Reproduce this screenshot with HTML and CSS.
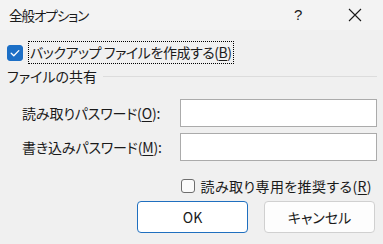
FILE: index.html
```html
<!DOCTYPE html>
<html lang="ja">
<head>
<meta charset="utf-8">
<title>全般オプション</title>
<link rel="stylesheet" href="styles.css">
</head>
<body>
<div class="window">
  <div class="titlebar">
    <span class="title">全般オプション</span>
    <span class="help">?</span>
    <span class="close">
      <svg width="14" height="14" viewBox="0 0 14 14"><path d="M1 1 L13 13 M13 1 L1 13" stroke="#1a1a1a" stroke-width="1.1" fill="none"/></svg>
    </span>
  </div>
  <div class="content">
    <div class="backup-row">
      <span class="cb checked">
        <svg width="16" height="16" viewBox="0 0 16 16"><path d="M4.2 8.2 L6.8 10.7 L11.8 5.6" stroke="#fff" stroke-width="1.3" fill="none" stroke-linecap="round" stroke-linejoin="round"/></svg>
      </span>
      <span class="focus">バックアップ ファイルを作成する(<u>B</u>)</span>
    </div>
    <div class="group-head">
      <span class="group-title">ファイルの共有</span>
      <span class="line"></span>
    </div>
    <div class="field-row first">
      <span class="label">読み取りパスワード(<u>O</u>):</span>
      <span class="input"></span>
    </div>
    <div class="field-row second">
      <span class="label">書き込みパスワード(<u>M</u>):</span>
      <span class="input"></span>
    </div>
    <div class="ro-row">
      <span class="cb small"></span>
      <span class="ro-text">読み取り専用を推奨する(<u>R</u>)</span>
    </div>
    <div class="buttons">
      <button class="btn primary">OK</button>
      <button class="btn">キャンセル</button>
    </div>
  </div>
</div>
</body>
</html>
```

FILE: styles.css
```css
* { box-sizing: border-box; }
html, body {
  margin: 0;
  padding: 0;
  width: 383px;
  height: 244px;
  overflow: hidden;
  background: #f0f0f0;
}
body {
  font-family: "Noto Sans CJK JP", "Noto Sans", sans-serif;
  font-feature-settings: "palt";
  font-size: 14px;
  color: #1a1a1a;
}
.window {
  width: 383px;
  height: 244px;
  display: flex;
  flex-direction: column;
}
.titlebar {
  height: 30px;
  background: #f3f3f3;
  display: flex;
  align-items: center;
  padding-left: 9px;
}
.title {
  flex: 1;
  font-size: 13.5px;
  letter-spacing: -1px;
  line-height: 20px;
  margin-top: -1px;
}
.help {
  width: 14px;
  font-family: "Liberation Sans", sans-serif;
  font-size: 15px;
  margin-right: 40px;
  margin-top: -2px;
}
.close {
  width: 14px;
  height: 14px;
  margin-right: 21px;
  display: flex;
}
.content {
  display: flex;
  flex-direction: column;
  padding: 0 6px 0 7px;
}
.backup-row {
  display: flex;
  align-items: center;
  margin-top: 11px;
  height: 23px;
}
.cb {
  width: 16px;
  height: 16px;
  border-radius: 3px;
  border: 1px solid #8a8a8a;
  background: #fbfbfb;
  display: flex;
  flex: none;
}
.cb.checked {
  background: #1c6fc6;
  border-color: #1c6fc6;
}
.cb.checked svg { margin: -1px; }
.focus {
  margin-left: 5px;
  height: 23px;
  line-height: 21px;
  padding: 0 1px 0 1px;
  border: 1px dotted #000;
  white-space: nowrap;
  letter-spacing: -0.45px;
}
.group-head {
  display: flex;
  align-items: center;
  height: 24px;
}
.group-title {
  white-space: nowrap;
  line-height: 20px;
}
.line {
  flex: 1;
  height: 1px;
  background: #dcdcdc;
  margin-left: 6px;
  margin-right: 0;
}
.field-row {
  display: flex;
  align-items: center;
}
.field-row.first { margin-top: 11px; }
.field-row.second { margin-top: 6px; }
.label {
  width: 173px;
  padding-left: 15px;
  white-space: nowrap;
  letter-spacing: -0.15px;
}
.input {
  width: 197px;
  height: 28px;
  background: #fff;
  border: 1px solid #ababab;
}
.ro-row {
  display: flex;
  align-items: center;
  justify-content: flex-end;
  margin-top: 15px;
  height: 20px;
  padding-right: 5px;
}
.cb.small {
  width: 14px;
  height: 14px;
  border-color: #6e6e6e;
  border-radius: 3px;
}
.ro-text {
  margin-left: 6px;
  white-space: nowrap;
  letter-spacing: 0.4px;
}
.buttons {
  display: flex;
  justify-content: flex-end;
  gap: 16px;
  margin-top: 5px;
  padding-right: 2px;
}
.btn {
  width: 111px;
  height: 32px;
  border-radius: 4px;
  border: 1px solid #d0d0d0;
  background: #fdfdfd;
  font-family: "Noto Sans CJK JP", "Noto Sans", sans-serif;
  font-feature-settings: "palt";
  font-size: 14px;
  color: #1a1a1a;
  padding: 0;
}
.btn.primary {
  border-color: #1f6fbf;
  background: #ffffff;
}
u { text-underline-offset: 2px; }
```
